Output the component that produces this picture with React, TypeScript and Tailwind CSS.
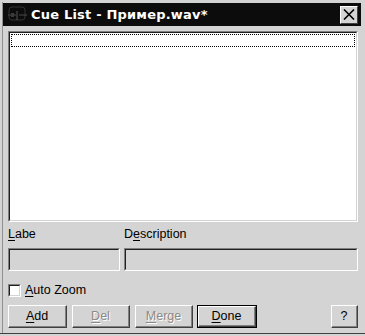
import React from "react";

const font = { fontFamily: '"Liberation Sans", Arial, sans-serif' };

function Btn({ children, disabled, def, w }: { children: React.ReactNode; disabled?: boolean; def?: boolean; w: string }) {
  return (
    <div className={`${w} h-[23px] ${def ? "border border-black" : ""}`}>
      <div className="w-full h-full border-t border-l border-t-white border-l-white border-b border-r border-b-[#404040] border-r-[#404040]">
        <div className="w-full h-full border-b border-r border-b-[#808080] border-r-[#808080] flex items-center justify-center text-[12.5px] leading-none">
          <span className={disabled ? "text-[#8a8a8a] [text-shadow:1px_1px_0_#fff]" : "text-black"}>{children}</span>
        </div>
      </div>
    </div>
  );
}

function Sunken({ className, children }: { className: string; children?: React.ReactNode }) {
  return (
    <div className={`${className} border-t border-l border-t-[#808080] border-l-[#808080] border-b border-r border-b-white border-r-white`}>
      <div className="w-full h-full border-t border-l border-t-[#202020] border-l-[#202020] border-b border-r border-b-[#d4d4d4] border-r-[#d4d4d4]">
        {children}
      </div>
    </div>
  );
}

export default function App() {
  return (
    <div style={font} className="w-[365px] h-[336px] bg-[#d4d4d4] flex flex-col overflow-hidden relative text-black select-none">
      <div className="absolute left-[2px] top-[2px] bottom-[3px] w-px bg-[#909090]" />
      <div className="absolute left-0 right-0 bottom-[2px] h-px bg-[#404040]" />
      {/* Title bar */}
      <div className="mt-[3px] ml-[3px] mr-[4px] h-[23px] bg-[#0c0c0c] flex items-center">
        <svg width="24" height="20" viewBox="0 0 24 20" className="ml-[2px]">
          <rect x="4" y="2" width="16" height="13" rx="3" fill="none" stroke="#333" strokeWidth="1" />
          <line x1="3" y1="10" x2="11" y2="10" stroke="#4a4a4a" strokeWidth="1" />
          <line x1="14" y1="10" x2="22" y2="10" stroke="#4a4a4a" strokeWidth="1" />
          <line x1="12" y1="6" x2="12" y2="15" stroke="#555" strokeWidth="1" />
          <rect x="6" y="8" width="3" height="4" fill="#3a3a3a" />
        </svg>
        <span className="ml-[2px] text-white font-bold text-[13px] tracking-[0.2px] leading-none" style={{ fontFamily: '"DejaVu Sans", "Liberation Sans", sans-serif' }}>
          Cue List - Пример.wav*
        </span>
        <div className="ml-auto mr-[3px] w-[18px] h-[18px] bg-[#d4d4d4] border-t border-l border-t-white border-l-white border-b border-r border-b-[#404040] border-r-[#404040] flex items-center justify-center">
          <svg width="12" height="11" viewBox="0 0 12 11">
            <path d="M1 0.5 L11 10.5 M11 0.5 L1 10.5" stroke="#000" strokeWidth="1.6" />
          </svg>
        </div>
      </div>

      <div className="pl-[8px] pr-[7px] flex flex-col">
        {/* List */}
        <Sunken className="mt-[5px] h-[191px] w-full bg-white">
          <div className="w-full h-full bg-white pt-[1px] px-[1px]">
            <div className="h-[13px] border border-dotted border-black" />
          </div>
        </Sunken>

        {/* Labels */}
        <div className="flex mt-[6px] text-[12.5px] leading-none h-[14px]">
          <div className="w-[116px]"><span className="underline underline-offset-2">L</span>abe</div>
          <div>D<span className="underline underline-offset-2">e</span>scription</div>
        </div>

        {/* Fields */}
        <div className="flex mt-[6px] gap-[4px]">
          <Sunken className="w-[112px] h-[23px] bg-[#d4d4d4]" />
          <Sunken className="flex-1 h-[23px] bg-[#d4d4d4]" />
        </div>

        {/* Checkbox */}
        <div className="flex items-center mt-[12px] h-[14px]">
          <Sunken className="w-[13px] h-[13px] bg-white">
            <div className="w-full h-full bg-white" />
          </Sunken>
          <span className="ml-[4px] text-[12.5px] leading-none"><span className="underline underline-offset-2">A</span>uto Zoom</span>
        </div>

        {/* Buttons */}
        <div className="flex mt-[8px]">
          <Btn w="w-[59px]"><span className="underline underline-offset-2">A</span>dd</Btn>
          <div className="ml-[5px]"><Btn w="w-[58px]" disabled><span className="underline underline-offset-2">D</span>el</Btn></div>
          <div className="ml-[5px]"><Btn w="w-[58px]" disabled><span className="underline underline-offset-2">M</span>erge</Btn></div>
          <div className="ml-[4px]"><Btn w="w-[60px]" def><span className="underline underline-offset-2">D</span>one</Btn></div>
          <div className="ml-auto"><Btn w="w-[27px]">?</Btn></div>
        </div>
      </div>
    </div>
  );
}
